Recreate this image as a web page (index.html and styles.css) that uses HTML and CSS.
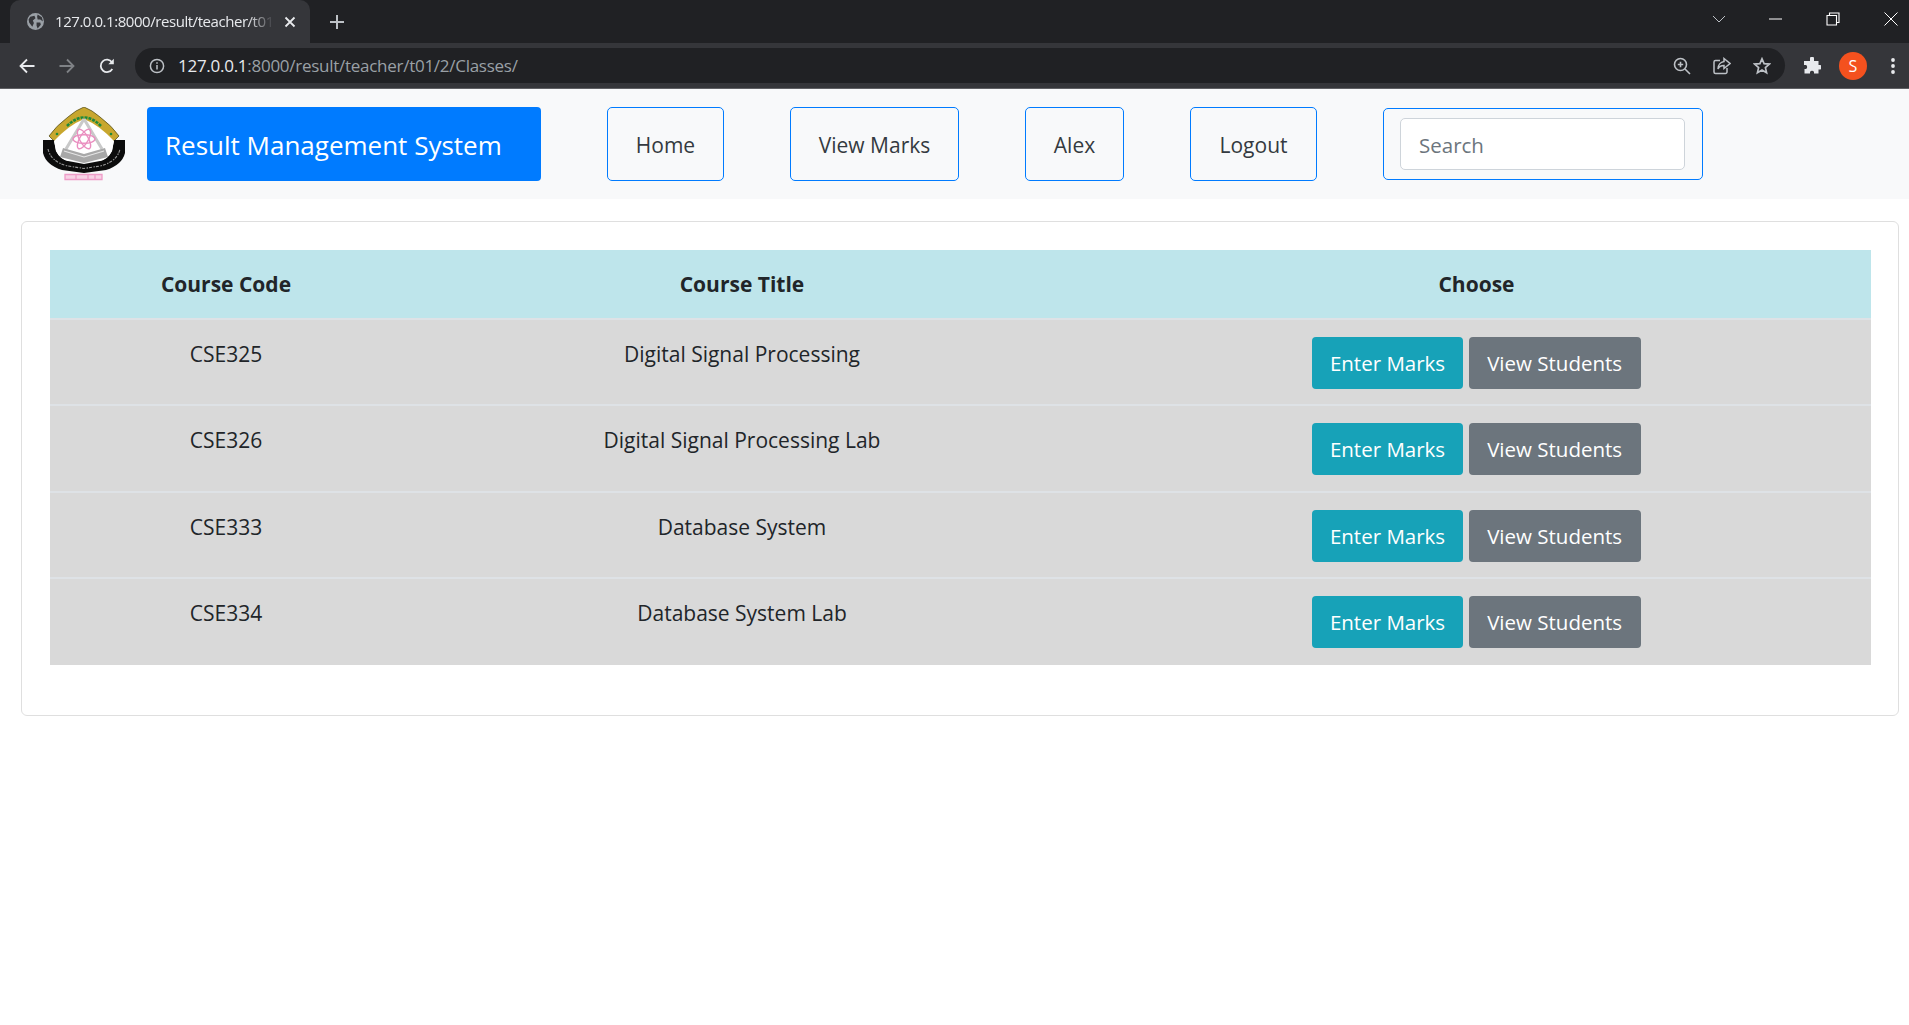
FILE: index.html
```html
<!DOCTYPE html>
<html>
<head lang="en">
    <meta charset="UTF-8">
    <title>Result Management System</title>
    <link rel="stylesheet" href="styles.css">
</head>
<body>
<div class="tabstrip">
    <div class="tab">
        <svg class="tab-globe" viewBox="0 0 16 16"><circle cx="8" cy="8" r="8" fill="#9aa0a6"/><path d="M3 3.500 7 2.500 8 5 5.500 7 6.500 9.500 5 13 2 9 1.500 6ZM10 1.500 14 4 15 8 12.500 6 10 6 9.500 3.500ZM9 9 12.500 9 13 11 10 14.500 9 12Z" fill="#35363a"/></svg>
        <span class="tab-title">127.0.0.1:8000/result/teacher/t01</span>
        <svg class="tab-close" viewBox="0 0 12 12"><path d="M1.500 1.500 10.500 10.500M10.500 1.500 1.500 10.500" stroke="#e8eaed" stroke-width="1.800" fill="none"/></svg>
    </div>
    <svg class="new-tab" viewBox="0 0 16 16"><path d="M8 1V15M1 8H15" stroke="#bdc1c6" stroke-width="2" fill="none"/></svg>
    <div class="win-controls">
        <svg class="win-chevron" viewBox="0 0 14 8"><path d="M1 1 7 7 13 1" stroke="#bdc1c6" stroke-width="1" fill="none"/></svg>
        <svg class="win-min" viewBox="0 0 14 2"><path d="M0 1H13" stroke="#fff" stroke-width="1" fill="none"/></svg>
        <svg class="win-max" viewBox="0 0 14 14"><path d="M3.500 3V1H13V10.500H11M1 3.500H10.500V13H1Z" stroke="#fff" stroke-width="1.100" fill="none"/></svg>
        <svg class="win-x" viewBox="0 0 14 14"><path d="M.5.5 13.500 13.500M13.500.5 .5 13.500" stroke="#fff" stroke-width="1" fill="none"/></svg>
    </div>
</div>
<div class="toolbar">
    <svg class="nav-icon" viewBox="0 0 16 16"><path d="M15.500 8H2M8 1.500 1.500 8 8 14.500" stroke="#e8eaed" stroke-width="1.800" fill="none"/></svg>
    <svg class="nav-icon" viewBox="0 0 16 16"><path d="M.5 8H14M8 1.500 14.500 8 8 14.500" stroke="#7f8286" stroke-width="1.800" fill="none"/></svg>
    <svg class="nav-icon" viewBox="0 0 16 16"><path d="M13.300 11A6.200 6.200 0 1 1 13 4.200" stroke="#e8eaed" stroke-width="1.800" fill="none"/><path d="M14.800.8V6.300H9.300Z" fill="#e8eaed"/></svg>
    <div class="omnibox">
        <svg class="info-icon" viewBox="0 0 16 16"><circle cx="8" cy="8" r="6.600" stroke="#bdc1c6" stroke-width="1.500" fill="none"/><path d="M8 7V11.500M8 4.300V5.800" stroke="#bdc1c6" stroke-width="1.500" fill="none"/></svg>
        <span class="url"><span class="url-host">127.0.0.1</span>:8000/result/teacher/t01/2/Classes/</span>
        <svg class="omni-icon" viewBox="0 0 18 18"><circle cx="7.500" cy="7.500" r="6" stroke="#bdc1c6" stroke-width="1.600" fill="none"/><path d="M12 12 17 17M7.500 4.800V10.200M4.800 7.500H10.200" stroke="#bdc1c6" stroke-width="1.600" fill="none"/></svg>
        <svg class="omni-icon" viewBox="0 0 18 18"><path d="M7 3.500H2.500A1.500 1.500 0 0 0 1 5V15A1.500 1.500 0 0 0 2.500 16.500H12.500A1.500 1.500 0 0 0 14 15V11" stroke="#bdc1c6" stroke-width="1.500" fill="none"/><path d="M11 1.500 17 6.500 11 11.500V8.500C8 8.500 6 9.500 5 12 5 8 7.500 5 11 4.500Z" stroke="#bdc1c6" stroke-width="1.500" fill="none"/></svg>
        <svg class="omni-icon" viewBox="0 0 18 18"><path d="M9 1.800 11.100 6.700 16.400 7.100 12.400 10.600 13.600 15.800 9 13 4.400 15.800 5.600 10.600 1.600 7.100 6.900 6.700Z" stroke="#bdc1c6" stroke-width="1.700" fill="none"/></svg>
    </div>
    <svg class="ext-icon" viewBox="0 0 18 18"><path d="M7 1.500A2 2 0 0 1 11 1.500V4H15.500V8H17A2.200 2.200 0 0 1 17 12.500H15.500V16.500H11V15A2.200 2.200 0 0 0 7 15V16.500H1.500V12H3A2.300 2.300 0 0 0 3 8H1V4H7Z" fill="#e8eaed"/></svg>
    <div class="avatar">S</div>
    <svg class="menu-icon" viewBox="0 0 4 18"><circle cx="2" cy="3" r="1.900" fill="#e8eaed"/><circle cx="2" cy="9" r="1.900" fill="#e8eaed"/><circle cx="2" cy="15" r="1.900" fill="#e8eaed"/></svg>
</div>
<nav class="navbar">
    <svg class="logo" viewBox="0 0 84 74">
        <path d="M42 0Q50 3 58 10 70 19 77 29L72 34 12 34 7 29Q14 19 26 10 34 3 42 0Z" fill="#c8a72e" stroke="#5a5420" stroke-width=".8"/>
        <path d="M25 19Q42 2 59 19" stroke="#1f8a3c" stroke-width="2.600" stroke-dasharray="3 1" fill="none"/>
        <circle cx="15" cy="27" r="1.300" fill="#1f8a3c"/>
        <circle cx="69" cy="27" r="1.300" fill="#1f8a3c"/>
        <path d="M1 33H12L14 44Q18 52 26 54L42 57 58 54Q66 52 70 44L72 33H83L83 46Q80 58 64 63L42 66 20 63Q4 58 1 46Z" fill="#0c0c0c"/>
        <path d="M12 34 Q27 18 42 12 57 18 72 34L70 44Q66 52 58 54H26Q18 52 14 44Z" fill="#fff"/>
        <path d="M42 12 24 42M42 12 60 42" stroke="#c9c9c9" stroke-width="3" fill="none"/>
        <path d="M21 41 42 47 63 41 66 50 42 56 18 50Z" fill="#a8a8a8"/>
        <path d="M22 44 42 50 62 44" stroke="#e6e6e6" stroke-width="1.100" fill="none"/>
        <g stroke="#ea8fc0" stroke-width="1.400" fill="none">
            <ellipse cx="42" cy="32" rx="11" ry="4.300"/>
            <ellipse cx="42" cy="32" rx="11" ry="4.300" transform="rotate(60 42 32)"/>
            <ellipse cx="42" cy="32" rx="11" ry="4.300" transform="rotate(120 42 32)"/>
        </g>
        <path d="M6 42Q9 55 26 59L42 61.500 58 59Q75 55 78 42" stroke="#9a9a9a" stroke-width="1.100" stroke-dasharray="3 1.500 1.500 1" fill="none"/>
        <path d="M23 67.500H60V72.500H23ZM34 67.500V72.500M46 67.500V72.500M53 67.500V72.500" stroke="#ee9cc8" stroke-width="1.300" fill="#f7d3e6"/>
    </svg>
    <a class="brand">Result Management System</a>
    <a class="nav-btn nav-home">Home</a>
    <a class="nav-btn nav-marks">View Marks</a>
    <a class="nav-btn nav-alex">Alex</a>
    <a class="nav-btn nav-logout">Logout</a>
    <form class="search-form"><input class="search-input" type="text" placeholder="Search"></form>
</nav>
<div class="card">
    <table class="course-table">
        <thead>
            <tr>
                <th class="col-code">Course Code</th>
                <th class="col-title">Course Title</th>
                <th class="col-choose">Choose</th>
            </tr>
        </thead>
        <tbody>
            <tr class="short-row">
                <td>CSE325</td>
                <td>Digital Signal Processing</td>
                <td class="actions"><a class="btn btn-info">Enter Marks</a><a class="btn btn-secondary">View Students</a></td>
            </tr>
            <tr>
                <td>CSE326</td>
                <td>Digital Signal Processing Lab</td>
                <td class="actions"><a class="btn btn-info">Enter Marks</a><a class="btn btn-secondary">View Students</a></td>
            </tr>
            <tr class="short-row">
                <td>CSE333</td>
                <td>Database System</td>
                <td class="actions"><a class="btn btn-info">Enter Marks</a><a class="btn btn-secondary">View Students</a></td>
            </tr>
            <tr>
                <td>CSE334</td>
                <td>Database System Lab</td>
                <td class="actions"><a class="btn btn-info">Enter Marks</a><a class="btn btn-secondary">View Students</a></td>
            </tr>
        </tbody>
    </table>
</div>
</body>
</html>
```

FILE: styles.css
```css
*{
    box-sizing: border-box;
}
body{
    margin: 0;
    background: #fff;
    color: #212529;
    font-family: "Open Sans", "Noto Sans", sans-serif;
    font-size: 21px;
}
svg{
    display: block;
    flex: none;
}

/* browser chrome */
.tabstrip{
    display: flex;
    align-items: center;
    height: 43px;
    padding-left: 10px;
    background: #202124;
}
.tab{
    display: flex;
    align-items: center;
    width: 300px;
    height: 43px;
    padding: 0 14px 0 17px;
    background: #35363a;
    border-radius: 10px 10px 0 0;
}
.tab-globe{
    width: 17px;
    height: 17px;
}
.tab-title{
    width: 219px;
    margin-left: 11px;
    padding-bottom: 2px;
    overflow: hidden;
    white-space: nowrap;
    color: #e8eaed;
    font-size: 15px;
    letter-spacing: -.45px;
    -webkit-mask-image: linear-gradient(to right, #000 88%, transparent 100%);
    mask-image: linear-gradient(to right, #000 88%, transparent 100%);
}
.tab-close{
    width: 12px;
    height: 12px;
    margin-left: 10px;
}
.new-tab{
    width: 16px;
    height: 16px;
    margin-left: 19px;
}
.win-controls{
    display: flex;
    align-items: center;
    margin-left: auto;
    padding: 0 11px 6px 0;
}
.win-chevron{
    width: 14px;
    height: 8px;
}
.win-min{
    width: 14px;
    height: 2px;
    margin-left: 43px;
}
.win-max{
    width: 14px;
    height: 14px;
    margin-left: 43px;
}
.win-x{
    width: 14px;
    height: 14px;
    margin-left: 44px;
}
.toolbar{
    display: flex;
    align-items: center;
    height: 46px;
    padding-left: 19px;
    background: #35363a;
    border-bottom: 1px solid #5f6064;
}
.nav-icon{
    width: 16px;
    height: 16px;
    margin-right: 24px;
}
.omnibox{
    display: flex;
    align-items: center;
    width: 1650px;
    height: 35px;
    margin-left: -4px;
    padding: 0 14px 0 14px;
    background: #202124;
    border-radius: 18px;
}
.info-icon{
    width: 16px;
    height: 16px;
}
.url{
    margin-left: 13px;
    color: #9aa0a6;
    font-size: 17px;
    letter-spacing: -.27px;
    white-space: nowrap;
}
.url-host{
    color: #e8eaed;
}
.omni-icon{
    width: 18px;
    height: 18px;
    margin-left: 22px;
}
.omni-icon:nth-of-type(2){
    margin-left: auto;
}
.ext-icon{
    width: 18px;
    height: 18px;
    margin-left: 18px;
}
.avatar{
    width: 28px;
    height: 28px;
    margin-left: 18px;
    border-radius: 50%;
    background: #f4511e;
    color: #fff;
    font-size: 16px;
    line-height: 28px;
    text-align: center;
}
.menu-icon{
    width: 4px;
    height: 18px;
    margin-left: 24px;
}

/* page */
.navbar{
    display: flex;
    align-items: center;
    height: 110px;
    padding-left: 42px;
    background: #f8f9fa;
}
.logo{
    width: 84px;
    height: 74px;
}
.brand{
    display: block;
    width: 394px;
    height: 74px;
    margin-left: 21px;
    padding-left: 18px;
    background: #007bff;
    border-radius: 4px;
    color: #fff;
    font-size: 26px;
    line-height: 76px;
}
.nav-btn{
    display: block;
    height: 74px;
    border: 1.5px solid #007bff;
    border-radius: 5px;
    color: #343a40;
    line-height: 75px;
    text-align: center;
}
.nav-home{
    width: 117px;
    margin-left: 66px;
}
.nav-marks{
    width: 169px;
    margin-left: 66px;
}
.nav-alex{
    width: 99px;
    margin-left: 66px;
}
.nav-logout{
    width: 127px;
    margin-left: 66px;
}
.search-form{
    display: flex;
    align-items: center;
    width: 320px;
    height: 72px;
    margin-left: 66px;
    padding-left: 16px;
    border: 1.5px solid #007bff;
    border-radius: 5px;
}
.search-input{
    width: 285px;
    height: 52px;
    padding: 2px 18px 0;
    background: #fff;
    border: 1px solid #ced4da;
    border-radius: 5px;
    color: #495057;
    font-family: inherit;
    font-size: 20.5px;
}
.search-input::placeholder{
    color: #6c757d;
}
.card{
    margin: 22px 10px 0 21px;
    padding: 28px 27px 50px 28px;
    border: 1.5px solid #dfdfdf;
    border-radius: 6px;
}
.course-table{
    width: 100%;
    border-collapse: collapse;
    table-layout: fixed;
    text-align: center;
}
.course-table th{
    height: 69px;
    padding-top: 1px;
    background: #bee5eb;
    font-weight: 700;
}
.col-code{
    width: 352px;
}
.col-title{
    width: 680px;
}
.course-table td{
    height: 87px;
    padding: 20px 0 0;
    vertical-align: top;
    background: #d9d9d9;
    border-top: 2px solid #dee2e6;
}
.course-table .short-row td{
    height: 86px;
}
.course-table .actions{
    padding-top: 17px;
    font-size: 0;
}
.btn{
    display: inline-block;
    height: 52px;
    padding: 0 17.5px;
    border-radius: 4px;
    color: #fff;
    font-size: 20.5px;
    line-height: 52px;
}
.btn-info{
    background: #17a2b8;
}
.btn-secondary{
    margin-left: 6px;
    padding: 0 18.5px;
    background: #6c757d;
}
```
